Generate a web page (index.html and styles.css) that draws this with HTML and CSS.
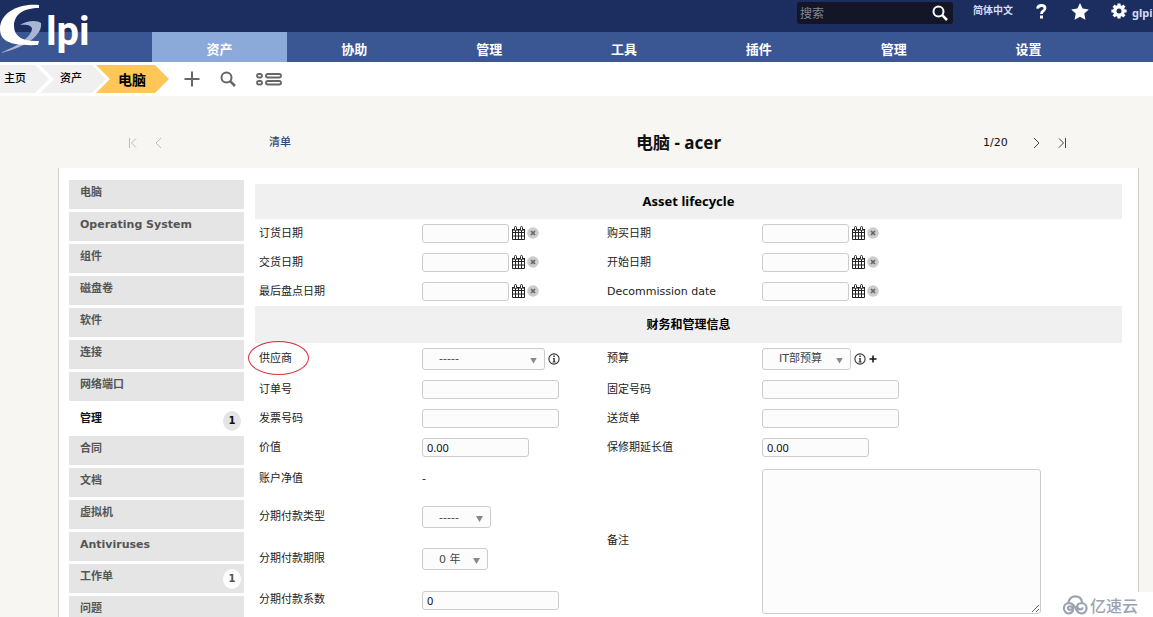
FILE: index.html
```
<!DOCTYPE html>
<html lang="zh-CN">
<head>
<meta charset="utf-8">
<title>电脑 - acer</title>
<link rel="stylesheet" href="styles.css">
</head>
<body>
<svg class="sprite" aria-hidden="true">
  <symbol id="calendar" viewBox="0 0 14 14">
    <path fill="none" stroke="#222" d="M.5 3.500h12v10H.5zM.5 6.500h12M.5 10h12M3.500 4v9.500M6.500 4v9.500M9.500 4v9.500"/>
    <path fill="#222" d="M0 3h13v1.500H0z"/>
    <rect x="2.500" y=".5" width="2" height="4" rx="1" fill="#fff" stroke="#222"/>
    <rect x="8.500" y=".5" width="2" height="4" rx="1" fill="#fff" stroke="#222"/>
  </symbol>
  <symbol id="clear" viewBox="0 0 12 12">
    <circle cx="6" cy="6" r="5.800" fill="#ccc"/>
    <path d="M4 4l4 4M8 4L4 8" stroke="#666" stroke-width="1.700"/>
  </symbol>
  <symbol id="info" viewBox="0 0 12 12">
    <circle cx="6" cy="6" r="5.100" fill="none" stroke="#333" stroke-width="1.100"/>
    <path d="M5.300 2.500h1.500V4H5.300zM4.800 5h2v3.600h.8v.8H4.600v-.8h.8V5.700h-.6z" fill="#333"/>
  </symbol>
  <symbol id="search" viewBox="0 0 16 16">
    <circle cx="6.500" cy="6.500" r="5" fill="none" stroke="currentColor" stroke-width="2"/>
    <path d="M10.200 10.200L15 15" stroke="currentColor" stroke-width="2.500"/>
  </symbol>
</svg>

<header class="top">
  <a class="logo" href="#" aria-label="Glpi">
    <svg width="96" height="56" viewBox="0 0 96 56">
      <path fill="#a9b5d3" d="M20 25C27 20 38 20 41 23C43 34 26 48 0 53C18 46 31 37 32 29C32 25 26 24 20 25Z"/>
      <path fill="#fff" d="M39 5C18 3 0 13 0 29C0 42 12 46 38 45L39 41C22 42 14 36 14 26C14 14 24 8 39 8Z"/>
      <text class="logo-text" x="46" y="45">lpi</text>
    </svg>
  </a>
  <form class="search">
    <input type="search" placeholder="搜索" aria-label="搜索">
    <button type="button" aria-label="搜索"><svg width="16" height="16"><use href="#search"/></svg></button>
  </form>
  <a class="lang" href="#">简体中文</a>
  <a class="help" href="#" aria-label="帮助"><svg width="11" height="15" viewBox="0 0 11 15"><path d="M1.500 4.600Q2 1.500 5.500 1.500T9 4.300Q9 6 7.200 7T5.500 10" fill="none" stroke="#fff" stroke-width="2.800"/><path d="M4 11.500h3v3H4z" fill="#fff"/></svg></a>
  <a class="star" href="#" aria-label="书签"><svg width="18" height="17" viewBox="0 0 18 17"><path fill="#fff" d="M9 0l2.600 5.600 6.200.8-4.500 4.200 1.100 6.200L9 13.800l-5.400 3 1.100-6.200L.2 6.400l6.200-.8z"/></svg></a>
  <a class="user" href="#"><svg width="16" height="16" viewBox="0 0 16 16"><circle cx="8" cy="8" r="4.200" fill="none" stroke="#fff" stroke-width="3.400"/><path d="M8 .4v3M8 12.600v3M.4 8h3M12.600 8h3M2.600 2.600l2.200 2.200M11.200 11.200l2.200 2.200M13.400 2.600l-2.200 2.200M4.800 11.200l-2.200 2.200" stroke="#fff" stroke-width="3.200"/></svg><span>glpi</span></a>
</header>

<nav class="menu">
  <a class="active" href="#">资产</a>
  <a href="#">协助</a>
  <a href="#">管理</a>
  <a href="#">工具</a>
  <a href="#">插件</a>
  <a href="#">管理</a>
  <a href="#">设置</a>
</nav>

<div class="crumbs">
  <a class="crumb crumb-home" href="#">主页</a>
  <a class="crumb crumb-mid" href="#">资产</a>
  <a class="crumb crumb-now" href="#">电脑</a>
  <button class="tool" type="button" aria-label="添加"><svg width="16" height="16" viewBox="0 0 16 16"><path d="M8 .5v15M.5 8h15" stroke="#666" stroke-width="2"/></svg></button>
  <button class="tool" type="button" aria-label="查找"><svg width="16" height="16"><use href="#search"/></svg></button>
  <button class="tool" type="button" aria-label="显示列表"><svg width="26" height="13" viewBox="0 0 26 13"><g fill="none" stroke="#666" stroke-width="1.800"><rect x="1" y="1" width="5" height="3.500" rx="1.700"/><rect x="1" y="8" width="5" height="3.500" rx="1.700"/><rect x="10" y="1" width="15" height="3.500" rx="1.700"/><rect x="10" y="8" width="15" height="3.500" rx="1.700"/></g></svg></button>
</div>

<div class="pager">
  <div class="pager-group off">
    <button type="button" aria-label="首条" disabled><svg width="9" height="12" viewBox="0 0 9 12"><path d="M1.500 1v10M8 1.500L3.500 6 8 10.500"/></svg></button>
    <button type="button" aria-label="上一条" disabled><svg width="9" height="12" viewBox="0 0 9 12"><path d="M7 1L2 6l5 5"/></svg></button>
  </div>
  <a href="#">清单</a>
  <h1>电脑 - acer</h1>
  <span>1/20</span>
  <div class="pager-group">
    <button type="button" aria-label="下一条"><svg width="9" height="12" viewBox="0 0 9 12"><path d="M2 1l5 5-5 5"/></svg></button>
    <button type="button" aria-label="末条"><svg width="9" height="12" viewBox="0 0 9 12"><path d="M7.500 1v10M1 1.500L5.500 6 1 10.500"/></svg></button>
  </div>
</div>

<main class="panel">
  <nav class="tabs">
    <a href="#">电脑</a>
    <a href="#">Operating System</a>
    <a href="#">组件</a>
    <a href="#">磁盘卷</a>
    <a href="#">软件</a>
    <a href="#">连接</a>
    <a href="#">网络端口</a>
    <a class="current" href="#">管理<span class="count">1</span></a>
    <a href="#">合同</a>
    <a href="#">文档</a>
    <a href="#">虚拟机</a>
    <a href="#">Antiviruses</a>
    <a href="#">工作单<span class="count">1</span></a>
    <a href="#">问题</a>
  </nav>

  <form class="sheet">
    <h2 class="latin">Asset lifecycle</h2>
    <div class="grid">
      <label for="order-date">订货日期</label>
      <div class="field"><input class="date" id="order-date" type="text"><button type="button" aria-label="选择日期"><svg width="14" height="14"><use href="#calendar"/></svg></button><button type="button" aria-label="清除"><svg width="12" height="12"><use href="#clear"/></svg></button></div>
      <label for="buy-date">购买日期</label>
      <div class="field"><input class="date" id="buy-date" type="text"><button type="button" aria-label="选择日期"><svg width="14" height="14"><use href="#calendar"/></svg></button><button type="button" aria-label="清除"><svg width="12" height="12"><use href="#clear"/></svg></button></div>
      <label for="delivery-date">交货日期</label>
      <div class="field"><input class="date" id="delivery-date" type="text"><button type="button" aria-label="选择日期"><svg width="14" height="14"><use href="#calendar"/></svg></button><button type="button" aria-label="清除"><svg width="12" height="12"><use href="#clear"/></svg></button></div>
      <label for="use-date">开始日期</label>
      <div class="field"><input class="date" id="use-date" type="text"><button type="button" aria-label="选择日期"><svg width="14" height="14"><use href="#calendar"/></svg></button><button type="button" aria-label="清除"><svg width="12" height="12"><use href="#clear"/></svg></button></div>
      <label for="inventory-date">最后盘点日期</label>
      <div class="field"><input class="date" id="inventory-date" type="text"><button type="button" aria-label="选择日期"><svg width="14" height="14"><use href="#calendar"/></svg></button><button type="button" aria-label="清除"><svg width="12" height="12"><use href="#clear"/></svg></button></div>
      <label for="decommission-date">Decommission date</label>
      <div class="field"><input class="date" id="decommission-date" type="text"><button type="button" aria-label="选择日期"><svg width="14" height="14"><use href="#calendar"/></svg></button><button type="button" aria-label="清除"><svg width="12" height="12"><use href="#clear"/></svg></button></div>
    </div>

    <h2 class="tall">财务和管理信息</h2>
    <div class="grid finance">
      <label class="marked" for="supplier">供应商</label>
      <div class="field"><span class="pick pick-wide"><select id="supplier"><option>-----</option></select></span><button class="info" type="button" aria-label="详情"><svg width="12" height="12"><use href="#info"/></svg></button></div>
      <label for="budget">预算</label>
      <div class="field"><span class="pick pick-budget"><select id="budget"><option>IT部预算</option></select></span><button class="info" type="button" aria-label="详情"><svg width="12" height="12"><use href="#info"/></svg></button><button type="button" aria-label="添加"><svg width="8" height="8" viewBox="0 0 8 8"><path d="M4 .5v7M.5 4h7" stroke="#111" stroke-width="1.500"/></svg></button></div>
      <label for="order-number">订单号</label>
      <div class="field"><input id="order-number" type="text"></div>
      <label for="asset-number">固定号码</label>
      <div class="field"><input id="asset-number" type="text"></div>
      <label for="invoice">发票号码</label>
      <div class="field"><input id="invoice" type="text"></div>
      <label for="delivery-form">送货单</label>
      <div class="field"><input id="delivery-form" type="text"></div>
      <label for="value">价值</label>
      <div class="field"><input class="amount" id="value" type="text" value="0.00"></div>
      <label for="warranty">保修期延长值</label>
      <div class="field"><input class="amount" id="warranty" type="text" value="0.00"></div>
      <span class="label">账户净值</span>
      <div class="field">-</div>
      <label class="notes-label" for="notes">备注</label>
      <div class="notes"><textarea id="notes"></textarea></div>
      <label for="type">分期付款类型</label>
      <div class="field"><span class="pick pick-type"><select id="type"><option>-----</option></select></span></div>
      <label for="duration">分期付款期限</label>
      <div class="field"><span class="pick pick-years"><select id="duration"><option>0 年</option></select></span></div>
      <label for="coefficient">分期付款系数</label>
      <div class="field"><input id="coefficient" type="text" value="0"></div>
    </div>
  </form>
</main>

<div class="watermark">
  <svg width="27" height="20" viewBox="0 0 27 20"><g fill="none" stroke="#9aa3af" stroke-width="2.200" stroke-linecap="round"><path d="M6.500 7C7.500 3 10 1.300 13.500 1.300C17 1.300 19.500 3.500 20 7"/><path d="M9 14.500C7 15.500 5.500 14 6 12.500C7 10.500 10.500 11 11 13.500C11.500 16.500 9 18.500 6.500 18.500A5.300 5.300 0 0 1 6.500 8C11 8 12.500 11.500 14.500 15C15.800 17.500 17.500 18.500 20 18.500A5.300 5.300 0 0 0 20 8C16.500 8 14.500 10 15.500 12.500C16.500 15 20 15 20.500 13"/></g></svg>
  <span>亿速云</span>
</div>
</body>
</html>
```
FILE: styles.css
```
* {
  box-sizing: border-box;
}

html,
body {
  height: 100%;
  margin: 0;
  overflow: hidden;
}

body {
  position: relative;
  background: #f7f6f3;
  color: #222;
  font: 11px/16px "DejaVu Sans", "Noto Sans CJK SC", sans-serif;
}

a {
  color: inherit;
  text-decoration: none;
}

button {
  display: flex;
  padding: 0;
  border: 0;
  background: none;
  color: inherit;
}

svg {
  display: block;
}

.sprite {
  position: absolute;
  width: 0;
  height: 0;
}

.top {
  display: flex;
  justify-content: flex-end;
  height: 32px;
  background: #1c2d60;
  color: #d3dcf2;
}

.logo {
  position: absolute;
  left: 0;
  top: 0;
}

.logo-text {
  fill: #fff;
  font: bold 40px Roboto, sans-serif;
}

.search {
  display: flex;
  align-items: center;
  width: 156px;
  height: 22px;
  margin: 2px 20px 0 0;
  padding: 0 5px 0 3px;
  border-radius: 3px;
  background: #141526;
  color: #fff;
}

.search input {
  flex: 1;
  min-width: 0;
  height: 20px;
  padding: 0;
  border: 0;
  background: none;
  color: #fff;
  font: 12px "Noto Sans", "Noto Sans CJK SC", sans-serif;
}

.search input::placeholder {
  color: #858894;
}

.lang {
  width: 41px;
  margin: 3px 22px 0 0;
  font-size: 10px;
  font-weight: bold;
  white-space: nowrap;
}

.help {
  margin: 4px 24px 0 0;
}

.star {
  margin: 3px 22px 0 0;
}

.user {
  display: flex;
  gap: 5px;
  width: 42px;
  margin-top: 3px;
  overflow: hidden;
  font: bold 11px/19px "Noto Sans", sans-serif;
}

.user svg {
  flex: none;
}

.menu {
  display: grid;
  grid-template-columns: repeat(7, 1fr);
  grid-template-rows: 30px;
  height: 30px;
  padding: 0 57px 0 152px;
  background: #3a5693;
  color: #fff;
  font-size: 13px;
  font-weight: bold;
  line-height: 35px;
  text-align: center;
}

.menu .active {
  background: #8ba9d9;
}

.crumbs {
  display: flex;
  align-items: center;
  height: 34px;
  background: #fff;
  color: #666;
}

.crumb {
  height: 28px;
  background: #f0f0f0;
  color: #000;
  font-weight: 500;
  line-height: 27px;
}

.crumb-home {
  width: 49px;
  padding-left: 4px;
  clip-path: polygon(0 0, 35px 0, 100% 50%, 35px 100%, 0 100%);
}

.crumb-mid {
  width: 66px;
  margin-left: -9px;
  padding-left: 20px;
  clip-path: polygon(0 0, 52px 0, 100% 50%, 52px 100%, 0 100%, 14px 50%);
}

.crumb-now {
  width: 73px;
  margin: 0 15px 0 -10px;
  padding-left: 22px;
  background: #ffc658;
  font-size: 14px;
  font-weight: bold;
  line-height: 30px;
  clip-path: polygon(0 0, 59px 0, 100% 50%, 59px 100%, 0 100%, 14px 50%);
}

.tool {
  margin-right: 20px;
}

.pager {
  display: grid;
  grid-template-columns: 141px 105px 1fr 49px 107px;
  align-items: center;
  height: 72px;
  padding: 21px 14px 0 128px;
  color: #111;
}

.pager a {
  color: #2b4785;
  font-weight: 500;
}

.pager h1 {
  margin: 0;
  font: bold 17px/24px "Noto Sans", "Noto Sans CJK SC", sans-serif;
  text-align: center;
}

.pager-group {
  display: flex;
  gap: 17px;
}

.pager path {
  fill: none;
  stroke: #444;
}

.pager .off path {
  stroke: #bbb;
}

.panel {
  display: flex;
  gap: 11px;
  margin: 0 14px 0 58px;
  padding: 12px 16px 0 10px;
  border: solid #d2d0cb;
  border-width: 0 1px;
  background: #fff;
}

.tabs {
  display: flex;
  flex: none;
  flex-direction: column;
  gap: 3px;
  width: 175px;
  color: #555;
  font-weight: bold;
}

.tabs a {
  display: flex;
  justify-content: space-between;
  height: 29px;
  padding: 5px 3px 0 11px;
  background: #e5e5e5;
}

.tabs .current {
  padding-top: 7px;
  background: none;
  color: #111;
}

.count {
  width: 18px;
  height: 20px;
  border-radius: 50%;
  background: #fff;
  font-size: 10px;
  line-height: 20px;
  text-align: center;
}

.current .count {
  background: #e5e5e5;
}

.sheet {
  flex: 1;
  margin-top: 4px;
}

.sheet h2 {
  height: 35px;
  margin: 0;
  background: #f0f0f0;
  color: #000;
  font: bold 12px/35px "Noto Sans", "Noto Sans CJK SC", sans-serif;
  text-align: center;
}

.sheet .latin {
  font-size: 13px;
}

.sheet .tall {
  height: 37px;
  line-height: 37px;
}

.grid {
  display: grid;
  grid-template-columns: 163fr 185fr 155fr 360fr;
  grid-auto-rows: 29px;
  align-items: center;
  padding-left: 4px;
}

.finance {
  grid-template-rows: 33px 29px 29px 29px 34px 42px 42px 40px;
  margin-top: -1px;
}

.field {
  display: flex;
  gap: 2px;
  align-items: center;
}

.field input,
.notes textarea,
.pick {
  border: 1px solid #ccc;
  border-radius: 3px;
  background: #fcfcfc;
}

.field input {
  width: 137px;
  height: 19px;
  padding: 0 4px;
  color: #111;
  font: 11px "Noto Sans", sans-serif;
}

.field .date {
  width: 87px;
  margin-right: 1px;
}

.date ~ button {
  margin-bottom: 2px;
}

.date + button {
  margin-right: -1px;
}

.field .amount {
  width: 107px;
}

.pick {
  position: relative;
  height: 22px;
}

.pick::after {
  content: "";
  position: absolute;
  right: 7px;
  top: 9px;
  width: 7px;
  height: 6px;
  background: #888;
  clip-path: polygon(0 0, 100% 0, 50% 100%);
}

.pick select {
  width: 100%;
  height: 20px;
  padding: 0 0 0 16px;
  border: 0;
  background: none;
  color: #444;
  font: 11px "DejaVu Sans", "Noto Sans CJK SC", sans-serif;
  appearance: none;
}

.pick-wide {
  width: 123px;
}

.pick-budget {
  width: 89px;
}

.pick-type {
  width: 69px;
}

.pick-years {
  width: 66px;
}

.info {
  margin: 0 1px;
}

.marked {
  position: relative;
}

.marked::after {
  content: "";
  position: absolute;
  left: -11px;
  top: -10px;
  width: 59px;
  height: 32px;
  border: 1px solid #d9303e;
  border-radius: 50%;
}

.notes-label {
  grid-column: 3;
  grid-row: 5 / span 4;
}

.notes {
  grid-column: 4;
  grid-row: 5 / span 4;
}

.notes textarea {
  display: block;
  width: 279px;
  height: 145px;
}

.watermark {
  position: absolute;
  right: 0;
  bottom: 0;
  display: flex;
  gap: 1px;
  align-items: center;
  width: 97px;
  height: 25px;
  padding-left: 6px;
  background: #fff;
  color: #9aa3af;
  font: 500 16px/24px "Noto Sans CJK SC", sans-serif;
}
```
